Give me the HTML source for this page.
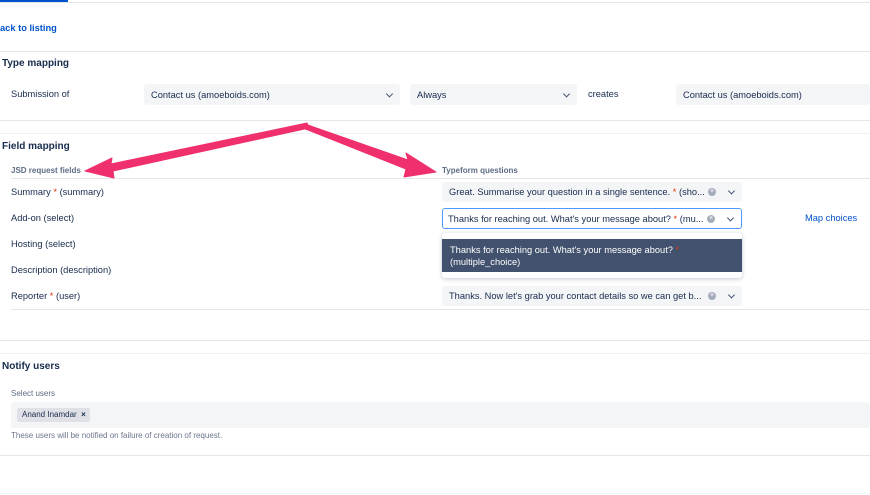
<!DOCTYPE html>
<html><head><style>
*{margin:0;padding:0;box-sizing:border-box}
body{width:870px;height:495px;overflow:hidden;background:#fff;font-family:"Liberation Sans",sans-serif;color:#172b4d;position:relative;font-size:9.3px}
.a{position:absolute;white-space:nowrap}
.hl{position:absolute;height:1px;background:#e4e6ea}
.h{font-weight:bold;font-size:10px;color:#172b4d}
.sel{position:absolute;background:#f4f5f7;border-radius:3px;padding-left:7px;font-size:9.3px;display:flex;align-items:center;color:#172b4d}
.chev{position:absolute;right:8px;top:50%;width:5px;height:5px;border-right:1.3px solid #42526e;border-bottom:1.3px solid #42526e;transform:translateY(-70%) rotate(45deg)}
.clr{position:absolute;right:26px;top:50%;width:8px;height:8px;margin-top:-4px;border-radius:50%;background:#a5adba;color:#fff;font-size:7px;line-height:8px;text-align:center}
.r{color:#de350b}
.lbl{font-size:8px;color:#5e6c84;font-weight:bold}
</style></head><body>
<div class="hl" style="left:0;top:2px;width:870px"></div>
<div class="a" style="left:0;top:0;width:68px;height:2px;background:#0052cc"></div>
<div class="a" style="left:0;top:23px;color:#0052cc;font-weight:bold;font-size:9.3px">ack to listing</div>
<div class="hl" style="left:0;top:51px;width:870px"></div>
<div class="a h" style="left:2px;top:58px">Type mapping</div>
<div class="a" style="left:11px;top:89px">Submission of</div>
<div class="sel" style="left:144px;top:84px;width:256px;height:21px">Contact us (amoeboids.com)<span class="chev"></span></div>
<div class="sel" style="left:410px;top:84px;width:167px;height:21px">Always<span class="chev"></span></div>
<div class="a" style="left:588px;top:89px">creates</div>
<div class="sel" style="left:676px;top:84px;width:194px;height:21px">Contact us (amoeboids.com)</div>
<div class="hl" style="left:0;top:120px;width:870px"></div>
<div class="hl" style="left:0;top:133px;width:870px;background:#f0f1f3"></div>
<div class="a h" style="left:2px;top:141px">Field mapping</div>
<div class="a lbl" style="left:11px;top:166px">JSD request fields</div>
<div class="a lbl" style="left:442px;top:166px">Typeform questions</div>
<div class="hl" style="left:11px;top:178px;width:859px"></div>
<div class="a" style="left:11px;top:187px">Summary <span class="r">*</span> (summary)</div>
<div class="a" style="left:11px;top:213px">Add-on (select)</div>
<div class="a" style="left:11px;top:239px">Hosting (select)</div>
<div class="a" style="left:11px;top:265px">Description (description)</div>
<div class="a" style="left:11px;top:291px">Reporter <span class="r">*</span> (user)</div>
<div class="sel" style="left:442px;top:182px;width:300px;height:20px">Great. Summarise your question in a single sentence. <span class="r">&nbsp;*&nbsp;</span> (sho...<span class="clr">×</span><span class="chev"></span></div>
<div class="sel" style="left:442px;top:208px;width:300px;height:21px;background:#fff;border:1.5px solid #4c9aff;padding-left:5px">Thanks for reaching out. What's your message about? <span class="r">&nbsp;*&nbsp;</span> (mu...<span class="clr">×</span><span class="chev"></span></div>
<div class="a" style="left:805px;top:213px;color:#0052cc">Map choices</div>
<div class="a" style="left:442px;top:233px;width:300px;height:45px;background:#fff;border-radius:3px;box-shadow:0 1px 4px rgba(9,30,66,.25)"></div>
<div class="a" style="left:442px;top:239px;width:300px;height:33px;background:#42526e;color:#fff;padding:5px 8px;line-height:12px;white-space:normal">Thanks for reaching out. What's your message about? <span class="r">*</span><br>(multiple_choice)</div>
<div class="sel" style="left:442px;top:286px;width:300px;height:20px">Thanks. Now let's grab your contact details so we can get b...<span class="clr">×</span><span class="chev"></span></div>
<div class="hl" style="left:11px;top:309px;width:859px"></div>
<div class="hl" style="left:0;top:340px;width:870px"></div>
<div class="hl" style="left:0;top:353px;width:870px;background:#f0f1f3"></div>
<div class="a h" style="left:2px;top:361px">Notify users</div>
<div class="a" style="left:11px;top:389px;font-size:8px;color:#5e6c84">Select users</div>
<div class="a" style="left:11px;top:402px;width:859px;height:26px;background:#f4f5f7;border-radius:3px"></div>
<div class="a" style="left:17px;top:408px;width:73px;height:14px;background:#dfe1e6;border-radius:2px;font-size:8px;line-height:14px;padding-left:5px">Anand Inamdar &nbsp;<b>×</b></div>
<div class="a" style="left:11px;top:431px;font-size:8px;color:#6b778c">These users will be notified on failure of creation of request.</div>
<div class="hl" style="left:0;top:455px;width:870px"></div>
<div class="hl" style="left:0;top:493px;width:870px;background:#eef6fb"></div>
<svg class="a" style="left:0;top:0" width="870" height="495">
<g fill="#f0306c" stroke="#f0306c" stroke-linejoin="round">
<path d="M307 123 L111 164 L112 158 L85 171 L114 178 L113 171 L309 128 Z" stroke-width="1"/>
<path d="M305 124 L408 160 L406 153 L436 172 L404 177 L406 169 L303 128 Z" stroke-width="1"/>
</g>
</svg>
</body></html>
